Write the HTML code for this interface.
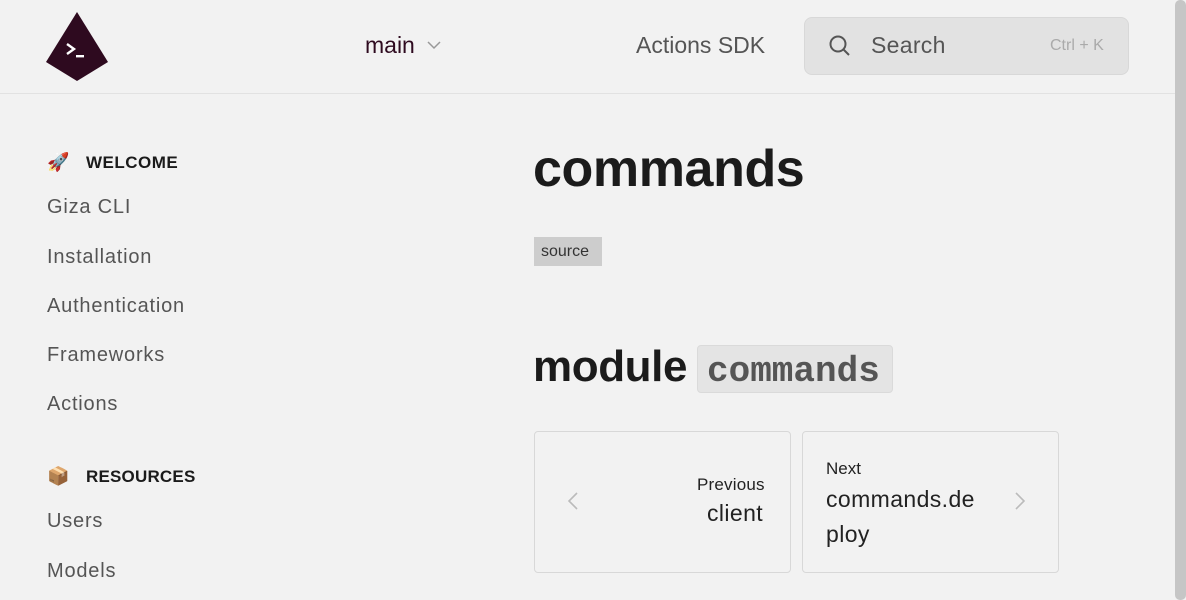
<!DOCTYPE html>
<html><head><meta charset="utf-8"><style>
*{margin:0;padding:0;box-sizing:border-box}
body{width:1186px;height:600px;overflow:hidden;background:#f2f2f2;font-family:"Liberation Sans",sans-serif;position:relative}
.a{position:absolute;white-space:nowrap}
.hdr{position:absolute;left:0;top:0;width:1175px;height:94px;border-bottom:1px solid #e2e2e2}
.side{color:#555;font-size:20px;letter-spacing:.8px}
.sec{font-weight:bold;font-size:17px;color:#1b1b1b;letter-spacing:.5px}
.card{position:absolute;border:1px solid #d8d8d8;border-radius:4px;width:257px;height:142px;top:431px}
</style></head><body>
<div class="hdr"></div>
<svg class="a" style="left:44px;top:10px" width="66" height="74" viewBox="0 0 66 74">
<polygon points="33,2 64,52 33,71 2,52" fill="#2e0a1f"/>
<path d="M23 34 L30 39 L23 44" stroke="#fff" stroke-width="2.4" fill="none"/>
<rect x="32" y="45" width="8" height="2.4" fill="#fff"/>
</svg>
<div class="a" style="left:365px;top:32px;font-size:23px;color:#2e0a1f">main</div>
<svg class="a" style="left:427px;top:41px" width="14" height="9"><path d="M1 1 L7 7 L13 1" stroke="#999" stroke-width="1.5" fill="none"/></svg>
<div class="a" style="left:636px;top:32px;font-size:23px;color:#555">Actions SDK</div>
<div class="a" style="left:804px;top:17px;width:325px;height:58px;background:#e2e2e2;border:1px solid #d8d8d8;border-radius:8px"></div>
<svg class="a" style="left:828px;top:34px" width="24" height="24"><circle cx="10" cy="10" r="7.5" stroke="#555" stroke-width="2" fill="none"/><path d="M15.5 15.5 L21 21" stroke="#555" stroke-width="2"/></svg>
<div class="a" style="left:871px;top:32px;font-size:23px;color:#555;letter-spacing:.3px">Search</div>
<div class="a" style="left:1050px;top:37px;font-size:16px;color:#aaa">Ctrl + K</div>
<div class="a" style="left:1175px;top:0;width:11px;height:600px;background:#c6c6c6;border-radius:5px"></div>

<div class="a" style="left:47px;top:152px;font-size:18px">🚀</div>
<div class="a sec" style="left:86px;top:153px">WELCOME</div>
<div class="a side" style="left:47px;top:196px">Giza CLI</div>
<div class="a side" style="left:47px;top:246px">Installation</div>
<div class="a side" style="left:47px;top:295px">Authentication</div>
<div class="a side" style="left:47px;top:344px">Frameworks</div>
<div class="a side" style="left:47px;top:393px">Actions</div>
<div class="a" style="left:47px;top:466px;font-size:18px">📦</div>
<div class="a sec" style="left:86px;top:467px;letter-spacing:.2px">RESOURCES</div>
<div class="a side" style="left:47px;top:510px">Users</div>
<div class="a side" style="left:47px;top:560px">Models</div>

<div class="a" style="left:533px;top:139px;font-size:52px;font-weight:bold;color:#1b1b1b;letter-spacing:-.4px">commands</div>
<div class="a" style="left:534px;top:237px;width:68px;height:29px;background:#cdcdcd;color:#333;font-size:16px;padding:6px 0 0 7px">source</div>
<div class="a" style="left:533px;top:342px;font-size:44px;font-weight:bold;color:#1b1b1b;letter-spacing:-.4px">module</div>
<div class="a" style="left:697px;top:345px;width:196px;height:48px;background:#e4e4e4;border:1px solid #dadada;border-radius:4px;font-family:'Liberation Mono',monospace;font-weight:bold;font-size:36px;color:#555;padding:5px 0 0 9px">commands</div>

<div class="card" style="left:534px"></div>
<svg class="a" style="left:567px;top:492px" width="12" height="18"><path d="M10 1 L2 9 L10 17" stroke="#bbb" stroke-width="1.6" fill="none"/></svg>
<div class="a" style="left:697px;top:475px;font-size:17px;color:#222;letter-spacing:.2px">Previous</div>
<div class="a" style="left:707px;top:500px;font-size:23px;color:#222;letter-spacing:.4px">client</div>
<div class="card" style="left:802px"></div>
<div class="a" style="left:826px;top:459px;font-size:17px;color:#222">Next</div>
<div class="a" style="left:826px;top:482px;font-size:23px;color:#222;line-height:35px;letter-spacing:.4px">commands.de<br>ploy</div>
<svg class="a" style="left:1014px;top:492px" width="12" height="18"><path d="M2 1 L10 9 L2 17" stroke="#bbb" stroke-width="1.6" fill="none"/></svg>
</body></html>
